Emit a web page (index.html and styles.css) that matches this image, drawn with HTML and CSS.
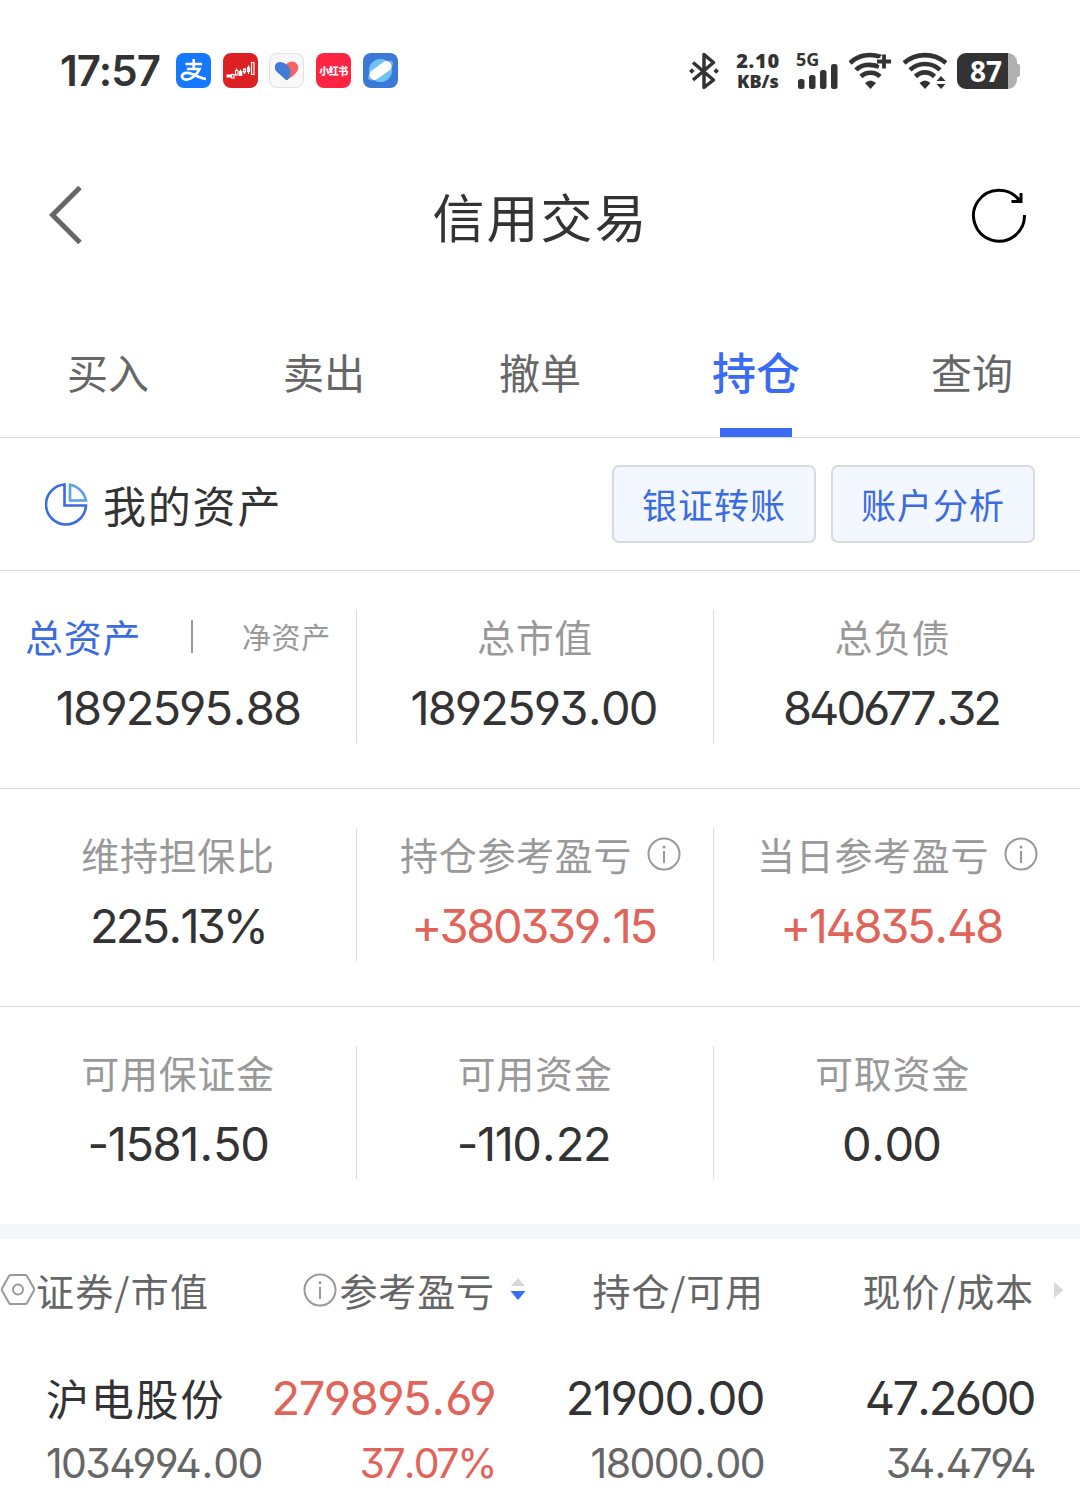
FILE: index.html
```html
<!DOCTYPE html>
<html lang="zh-CN">
<head>
<meta charset="utf-8">
<title>信用交易</title>
<link rel="stylesheet" href="styles.css">
</head>
<body>
<div class="status">
  <span class="clock">17:57</span>
  <div class="apps">
    <span class="app app-pay"><svg width="35" height="35" viewBox="0 0 35 35"><path d="M9.500 11H26M17.700 6V16M11 16H23.500C21.500 21 15 27.500 9 26.500C4 25 5.500 19.500 11.500 19.800C17.500 20.500 23 25 30 26" fill="none" stroke="#fff" stroke-width="2.700"/></svg></span>
    <span class="app app-stock"><svg width="35" height="35" viewBox="0 0 35 35"><g fill="#fff"><rect x="3.500" y="21.500" width="4.500" height="3"/><rect x="16" y="18" width="3.300" height="5"/><rect x="24" y="14" width="3" height="5"/></g><g fill="none" stroke="#fff" stroke-width="1.200"><rect x="8.500" y="21.500" width="2.500" height="3.500"/><rect x="12.500" y="17.500" width="2.500" height="4.500"/><rect x="20.500" y="16" width="2" height="3"/><rect x="28.500" y="9.500" width="2.500" height="12"/><path d="M13.500 15.500V17M17.500 16.500V18M21.500 19V21M25.500 12.500V21"/></g></svg></span>
    <span class="app app-health"><svg width="35" height="35" viewBox="0 0 35 35"><path d="M17 12C19 8 25 7 28 11C31 15 28 19 25 22L18 27Z" fill="#f36463"/><path d="M17 27L8 19C4 15 6 9 11 9C14 9 16 10 19 13C22 16 22 19 21 22C20 26 18 28 17 27Z" fill="#447bd9"/></svg></span>
    <span class="app app-red">小红书</span>
    <span class="app app-planet"><svg width="35" height="35" viewBox="0 0 35 35"><circle cx="17.500" cy="17.500" r="11.500" fill="#6fc3f4"/><ellipse cx="17.500" cy="17.500" rx="15" ry="5.500" transform="rotate(-36 17.500 17.500)" fill="#91b9ed" opacity=".75"/><rect x="5" y="12.500" width="25" height="10" rx="5" transform="rotate(-36 17.500 17.500)" fill="#fff"/></svg></span>
  </div>
  <div class="signals">
    <svg class="bt" width="30" height="38" viewBox="0 0 30 38"><path d="M4 10.500L24.500 28L15 35.500V2.500L24.500 10.500L4 28" fill="none" stroke="#333" stroke-width="3.500" stroke-linejoin="round"/><path d="M0 19L2.800 16.200L5.600 19L2.800 21.800ZM24.400 19L27.200 16.200L30 19L27.200 21.800Z" fill="#333"/></svg>
    <span class="speed"><b class="rate">2.10</b><b class="unit">KB/s</b></span>
    <span class="cell-signal"><b>5G</b><svg width="41" height="25" viewBox="0 0 41 25"><g fill="#333"><rect x="0" y="15" width="6.500" height="10" rx="2.500"/><rect x="11" y="11" width="6.500" height="14" rx="2.500"/><rect x="22" y="6" width="6.500" height="19" rx="2.500"/><rect x="33" y="0" width="6.500" height="25" rx="2.500"/></g></svg></span>
    <svg class="wifi1" width="43" height="38" viewBox="0 0 43 38"><g fill="none" stroke="#333" stroke-width="4.600"><path d="M1 11C9 3 21 1 32 5"/><path d="M7 18C12 12.500 21 11.500 30 14.500"/><path d="M12 24.500C17 19.500 26 19.500 31 24.500"/><path d="M29 9.500H42M35 4V17" stroke="#fff" stroke-width="7"/><path d="M28 9.500H42M35 2.500V16.500" stroke-width="3.800"/></g><path d="M16 31Q21.500 26 27 31L21.500 37Z" fill="#333"/></svg>
    <svg class="wifi2" width="44" height="38" viewBox="0 0 44 38"><g fill="none" stroke="#333" stroke-width="4.600"><path d="M1 11C13 .5 31 .5 43 11"/><path d="M7 17.800C15 10 29 10 37 17.800"/><path d="M12.500 24.500C18 19 26 19 31.500 24.500"/></g><path d="M16.500 31Q22 26 27.500 31L22 37ZM33.500 29L38 24L42.500 29ZM33.500 32L38 37L42.500 32Z" fill="#333"/></svg>
    <span class="battery"><span class="shell"><span class="charge">87</span></span><i class="nub"></i></span>
  </div>
</div>

<header class="nav">
  <svg class="back" width="34" height="58" viewBox="0 0 34 58"><path d="M31 1.500L3.500 29L31 56.500" fill="none" stroke="#666" stroke-width="5"/></svg>
  <h1>信用交易</h1>
  <svg class="reload" width="56" height="56" viewBox="0 0 56 56"><path d="M53.500 28A25.500 25.500 0 1 1 48.500 13.500" fill="none" stroke="#000" stroke-width="3"/><path d="M50 6V14.500H40.500" fill="none" stroke="#000" stroke-width="3"/></svg>
</header>

<nav class="tabs">
  <span class="tab">买入</span><span class="tab">卖出</span><span class="tab">撤单</span><span class="tab active">持仓</span><span class="tab">查询</span>
</nav>

<section class="assets">
  <svg width="43" height="43" viewBox="0 0 43 43"><path d="M19.500 1.500A20 20 0 1 0 41 22.500H19.500Z" fill="none" stroke="#3a6be0" stroke-width="2.600"/><path d="M25 1.800A20 20 0 0 1 41 17.500H25Z" fill="none" stroke="#5aa0e8" stroke-width="2.600"/></svg>
  <h2>我的资产</h2>
  <span class="btn">银证转账</span>
  <span class="btn">账户分析</span>
</section>

<section class="grid">
  <div class="cell"><div class="label switch"><span class="on">总资产</span><i></i><span class="off">净资产</span></div><div class="value">1892595<b>.</b>88</div></div>
  <div class="cell"><div class="label">总市值</div><div class="value">1892593<b>.</b>00</div></div>
  <div class="cell"><div class="label">总负债</div><div class="value narrow">840677<b>.</b>32</div></div>
</section>
<section class="grid">
  <div class="cell"><div class="label">维持担保比</div><div class="value narrow">225<b>.</b>13%</div></div>
  <div class="cell"><div class="label info-label"><span>持仓参考盈亏</span><svg width="34" height="34" viewBox="0 0 34 34"><circle cx="17" cy="17" r="15.500" fill="none" stroke="#999" stroke-width="2"/><circle cx="17" cy="10" r="1.500" fill="#999"/><path d="M17 14V26" stroke="#999" stroke-width="2"/></svg></div><div class="value up snug">+380339<b>.</b>15</div></div>
  <div class="cell"><div class="label info-label"><span>当日参考盈亏</span><svg width="34" height="34" viewBox="0 0 34 34"><circle cx="17" cy="17" r="15.500" fill="none" stroke="#999" stroke-width="2"/><circle cx="17" cy="10" r="1.500" fill="#999"/><path d="M17 14V26" stroke="#999" stroke-width="2"/></svg></div><div class="value up snug">+14835<b>.</b>48</div></div>
</section>
<section class="grid last">
  <div class="cell"><div class="label">可用保证金</div><div class="value wide">-1581<b>.</b>50</div></div>
  <div class="cell"><div class="label">可用资金</div><div class="value wide">-110<b>.</b>22</div></div>
  <div class="cell"><div class="label">可取资金</div><div class="value">0<b>.</b>00</div></div>
</section>

<section class="holdings">
  <div class="head">
    <span class="h first"><svg width="36" height="34" viewBox="0 0 36 34"><path d="M10.500 2H25.500Q26.500 2 27 3L34 15.500Q34.500 16.500 34 17.500L27 30Q26.500 31 25.500 31H10.500Q9.500 31 9 30L2 17.500Q1.500 16.500 2 15.500L9 3Q9.500 2 10.500 2Z" fill="none" stroke="#999" stroke-width="2"/><circle cx="18" cy="16.500" r="5" fill="none" stroke="#999" stroke-width="2"/></svg>证券/市值</span>
    <span class="h"><svg class="hinfo" width="34" height="34" viewBox="0 0 34 34"><circle cx="17" cy="17" r="15.500" fill="none" stroke="#999" stroke-width="2"/><circle cx="17" cy="9.500" r="1.500" fill="#999"/><path d="M17 14V26" stroke="#999" stroke-width="2"/></svg>参考盈亏<svg class="sort" width="16" height="24" viewBox="0 0 16 24"><path d="M1 8L8 0L15 8Z" fill="#d8d8d8"/><path d="M.5 13H15.500L8 22Z" fill="#3a6bf5"/></svg></span>
    <span class="h">持仓/可用</span>
    <span class="h">现价/成本</span>
    <svg class="more" width="10" height="16" viewBox="0 0 10 16"><path d="M0 0L9.500 8L0 16Z" fill="#d8d8d8"/></svg>
  </div>
  <div class="row main"><span class="name">沪电股份</span><span class="up gain">279895<b>.</b>69</span><span class="loose">21900<b>.</b>00</span><span class="price">47<b class="tight">.</b>2600</span></div>
  <div class="row sub"><span class="qty">1034994<b>.</b>00</span><span class="up pct">37<b class="tight">.</b>07%</span><span>18000<b>.</b>00</span><span class="cost">34<b>.</b>4794</span></div>
</section>
</body>
</html>
```
FILE: styles.css
```css
* { box-sizing: border-box; }
body { margin: 0; width: 1080px; height: 1504px; overflow: hidden; background: #fff; color: #333; font-family: "Noto Sans CJK SC", sans-serif; }
svg { display: block; flex: none; }
h1, h2 { margin: 0; font-weight: 400; }

.status { height: 141px; padding: 0 60px 0 60px; display: flex; align-items: center; }
.clock { width: 116px; font: 600 42px/60px Inter, sans-serif; letter-spacing: -0.9px; white-space: nowrap; }
.apps { display: flex; gap: 11.700px; }
.app { width: 35px; height: 35px; border-radius: 8px; overflow: hidden; }
.app-pay { background: #1677ff; }
.app-stock { background: #dc2024; }
.app-health { background: #f8f8f9; box-shadow: inset 0 0 0 1px #e2e2e2; }
.app-red { background: #ff2442; color: #fff; font-size: 10px; font-weight: 900; line-height: 35px; text-align: center; letter-spacing: -0.4px; white-space: nowrap; }
.app-planet { background: #3c78d6; }
.signals { margin-left: auto; display: flex; align-items: center; }
.speed { width: 44px; margin-left: 17px; display: flex; flex-direction: column; font: 700 19px/20px "Noto Sans", sans-serif; text-align: center; white-space: nowrap; }
.rate { font-size: 20px; letter-spacing: 0.700px; }
.unit { font-size: 18px; }
.cell-signal { width: 42px; height: 37px; margin-left: 16px; display: flex; flex-direction: column; }
.cell-signal b { height: 12px; font: 700 18px/14px "Noto Sans", sans-serif; }
.cell-signal svg { margin-left: 2px; }
.wifi1 { margin-left: 11px; }
.wifi2 { margin-left: 11px; }
.battery { height: 36px; margin-left: 10px; display: flex; align-items: center; }
.shell { width: 60px; height: 36px; border-radius: 9px; background: #b0b0b0; overflow: hidden; }
.charge { display: block; width: 51px; height: 36px; background: #333; color: #fff; font: 700 28px/36px "Noto Sans", sans-serif; text-align: center; padding-left: 7px; }
.nub { width: 3px; height: 13px; border-radius: 0 2px 2px 0; background: #b0b0b0; }

.nav { height: 169px; padding: 0 53px 21px 49px; display: grid; grid-template-columns: 1fr auto 1fr; align-items: center; }
.nav h1 { margin: 2px 0 0 5px; font-size: 52px; letter-spacing: 2px; line-height: 70px; }
.reload { justify-self: end; }

.tabs { height: 128px; border-bottom: 1px solid #d9dbdd; display: grid; grid-template-columns: repeat(5, 1fr); }
.tab { display: flex; flex-direction: column; align-items: center; font-size: 41px; line-height: 122px; color: #666; }
.active { font-size: 44px; font-weight: 500; color: #3a6bf5; }
.active::after { content: ""; width: 72px; height: 9px; margin-top: -4px; background: #3a6bf5; }

.assets { height: 133px; padding: 0 45px; border-bottom: 1px solid #d9dbdd; display: flex; align-items: center; }
.assets h2 { flex: 1; margin-left: 15px; font-size: 43px; letter-spacing: 1.800px; }
.btn { width: 204px; height: 78px; margin-left: 15px; border: 2px solid #d9dadd; border-radius: 7px; background: #f3f7ff; color: #3a6be0; font-size: 35px; letter-spacing: 1px; line-height: 74px; text-align: center; }

.grid { height: 218px; border-bottom: 1px solid #d9dbdd; padding: 39px 9px 0 0; display: grid; grid-template-columns: repeat(3, 357px); }
.last { border-bottom: 0; height: 217px; }
.cell { height: 133px; border-right: 1px solid #d9dbdd; text-align: center; }
.cell:last-child { border-right: 0; }
.label { height: 52px; font-size: 38px; letter-spacing: 0.700px; line-height: 52px; color: #999; }
.value { margin-top: 16px; font: 390 47px/60px Inter, sans-serif; font-feature-settings: "ss01"; letter-spacing: -1.900px; }
.cell + .cell .value { padding-right: 3px; }
.narrow { letter-spacing: -3px; }
.snug { letter-spacing: -2.400px; }
.wide { letter-spacing: -1.400px; }
.value b, .row b { margin: 0 1.500px; font-weight: inherit; }
.row .tight { margin: 0 0.500px; }
.switch { display: flex; align-items: center; padding: 0 25px; justify-content: space-between; }
.switch i { width: 2px; height: 33px; background: #999; }
.on { color: #3a6be0; }
.off { font-size: 29px; letter-spacing: 0.700px; }
.info-label { display: flex; align-items: center; padding-left: 43px; }
.info-label svg { margin-left: 15px; }
.up { color: #e0645a; }

.holdings { border-top: 15px solid #f5f6f8; }
.head { height: 123px; padding-bottom: 22px; display: grid; grid-template-columns: 270px 256px 238px 270px 46px; align-items: center; font-size: 38px; color: #666; }
.h { display: flex; align-items: center; justify-content: flex-end; letter-spacing: 0.900px; }
.first { justify-content: flex-start; letter-spacing: 1.300px; }
.hinfo { margin-right: 2px; }
.sort { margin-left: 15px; }
.more { margin-left: 20px; }
.row { display: grid; grid-template-columns: 270px 225px 269px 270px; font-family: Inter, "Noto Sans CJK SC", sans-serif; font-weight: 380; font-feature-settings: "ss01"; text-align: right; }
.main { height: 71px; font-size: 47px; line-height: 72px; letter-spacing: -1.900px; }
.name { padding-left: 46px; text-align: left; font-family: "Noto Sans CJK SC", sans-serif; font-weight: 400; font-size: 43px; line-height: 70px; letter-spacing: 1.800px; }
.gain { letter-spacing: -1.500px; }
.loose { letter-spacing: -1.500px; }
.price { letter-spacing: -2.500px; }
.sub { height: 60px; font-size: 41px; line-height: 60px; letter-spacing: -1.600px; color: #666; }
.sub .up { color: #e0645a; }
.pct, .cost { letter-spacing: -2.400px; }
.qty { padding-left: 46px; text-align: left; }
```
